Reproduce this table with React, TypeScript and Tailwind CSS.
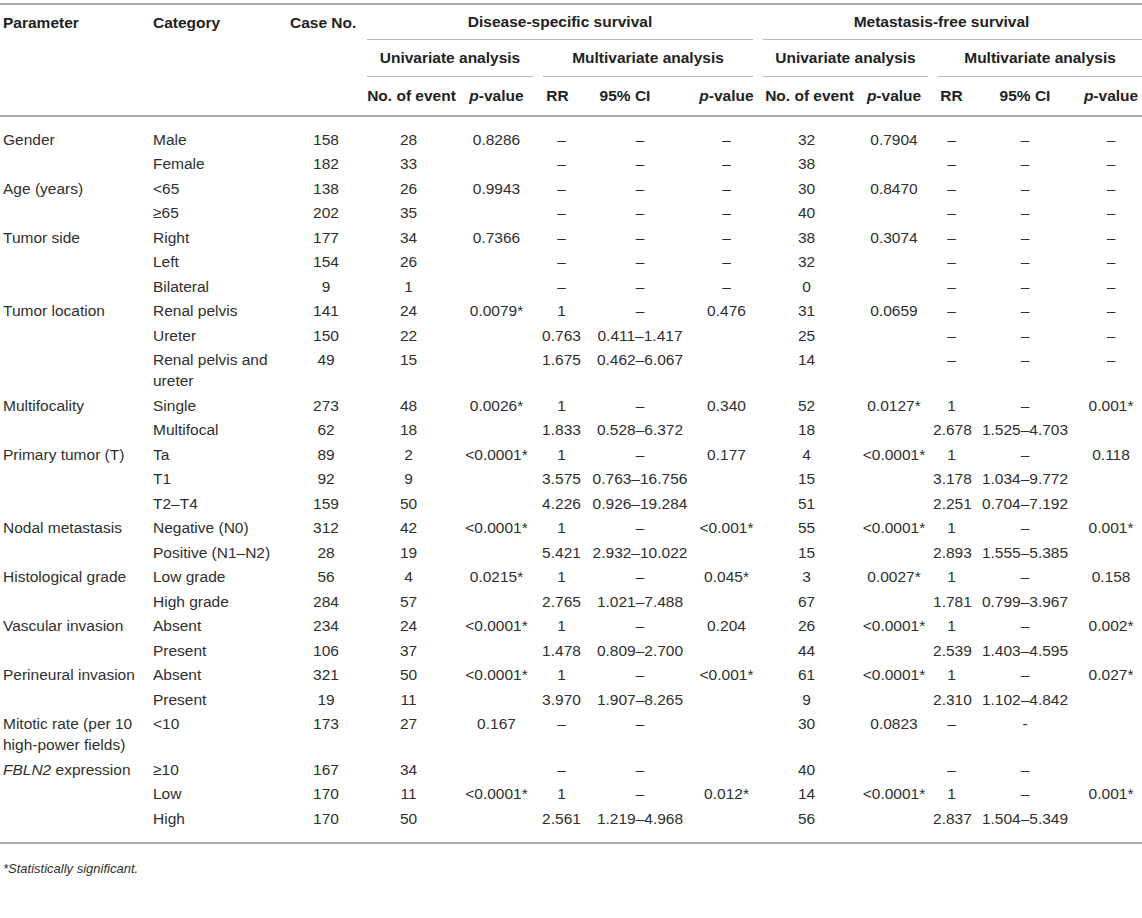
import React from "react";

type Cell = React.ReactNode;

const I = ({ children }: { children: React.ReactNode }) => <span className="italic">{children}</span>;

const rows: Cell[][] = [
  ["Gender", "Male", "158", "28", "0.8286", "–", "–", "–", "32", "0.7904", "–", "–", "–"],
  ["", "Female", "182", "33", "", "–", "–", "–", "38", "", "–", "–", "–"],
  ["Age (years)", "<65", "138", "26", "0.9943", "–", "–", "–", "30", "0.8470", "–", "–", "–"],
  ["", "≥65", "202", "35", "", "–", "–", "–", "40", "", "–", "–", "–"],
  ["Tumor side", "Right", "177", "34", "0.7366", "–", "–", "–", "38", "0.3074", "–", "–", "–"],
  ["", "Left", "154", "26", "", "–", "–", "–", "32", "", "–", "–", "–"],
  ["", "Bilateral", "9", "1", "", "–", "–", "–", "0", "", "–", "–", "–"],
  ["Tumor location", "Renal pelvis", "141", "24", "0.0079*", "1", "–", "0.476", "31", "0.0659", "–", "–", "–"],
  ["", "Ureter", "150", "22", "", "0.763", "0.411–1.417", "", "25", "", "–", "–", "–"],
  ["", "Renal pelvis and ureter", "49", "15", "", "1.675", "0.462–6.067", "", "14", "", "–", "–", "–"],
  ["Multifocality", "Single", "273", "48", "0.0026*", "1", "–", "0.340", "52", "0.0127*", "1", "–", "0.001*"],
  ["", "Multifocal", "62", "18", "", "1.833", "0.528–6.372", "", "18", "", "2.678", "1.525–4.703", ""],
  ["Primary tumor (T)", "Ta", "89", "2", "<0.0001*", "1", "–", "0.177", "4", "<0.0001*", "1", "–", "0.118"],
  ["", "T1", "92", "9", "", "3.575", "0.763–16.756", "", "15", "", "3.178", "1.034–9.772", ""],
  ["", "T2–T4", "159", "50", "", "4.226", "0.926–19.284", "", "51", "", "2.251", "0.704–7.192", ""],
  ["Nodal metastasis", "Negative (N0)", "312", "42", "<0.0001*", "1", "–", "<0.001*", "55", "<0.0001*", "1", "–", "0.001*"],
  ["", "Positive (N1–N2)", "28", "19", "", "5.421", "2.932–10.022", "", "15", "", "2.893", "1.555–5.385", ""],
  ["Histological grade", "Low grade", "56", "4", "0.0215*", "1", "–", "0.045*", "3", "0.0027*", "1", "–", "0.158"],
  ["", "High grade", "284", "57", "", "2.765", "1.021–7.488", "", "67", "", "1.781", "0.799–3.967", ""],
  ["Vascular invasion", "Absent", "234", "24", "<0.0001*", "1", "–", "0.204", "26", "<0.0001*", "1", "–", "0.002*"],
  ["", "Present", "106", "37", "", "1.478", "0.809–2.700", "", "44", "", "2.539", "1.403–4.595", ""],
  ["Perineural invasion", "Absent", "321", "50", "<0.0001*", "1", "–", "<0.001*", "61", "<0.0001*", "1", "–", "0.027*"],
  ["", "Present", "19", "11", "", "3.970", "1.907–8.265", "", "9", "", "2.310", "1.102–4.842", ""],
  ["Mitotic rate (per 10 high-power fields)", "<10", "173", "27", "0.167", "–", "–", "", "30", "0.0823", "–", "-", ""],
  [<><I>FBLN2</I> expression</>, "≥10", "167", "34", "", "–", "–", "", "40", "", "–", "–", ""],
  ["", "Low", "170", "11", "<0.0001*", "1", "–", "0.012*", "14", "<0.0001*", "1", "–", "0.001*"],
  ["", "High", "170", "50", "", "2.561", "1.219–4.968", "", "56", "", "2.837", "1.504–5.349", ""],
];

const PV = () => (
  <>
    <I>p</I>-value
  </>
);

export default function App() {
  return (
    <div className="w-[1142px] bg-white text-[#2f2f2f] font-['Liberation_Sans',Arial,sans-serif] text-[15.5px]">
      <div className="mt-[3px] border-y-2 border-[#a9a9a9]">
        <table className="w-[1142px] table-fixed border-collapse">
          <colgroup>
            <col className="w-[150px]" />
            <col className="w-[140px]" />
            <col className="w-[72px]" />
            <col className="w-[93px]" />
            <col className="w-[83px]" />
            <col className="w-[47px]" />
            <col className="w-[110px]" />
            <col className="w-[63px]" />
            <col className="w-[97px]" />
            <col className="w-[78px]" />
            <col className="w-[37px]" />
            <col className="w-[110px]" />
            <col className="w-[62px]" />
          </colgroup>
          <thead className="font-bold text-[#222]">
            <tr>
              <th className="p-0 text-left font-bold">
                <div className="h-[35px] flex items-center pl-[3px]">Parameter</div>
              </th>
              <th className="p-0 text-left font-bold">
                <div className="h-[35px] flex items-center pl-[3px]">Category</div>
              </th>
              <th className="p-0 text-left font-bold">
                <div className="h-[35px] flex items-center whitespace-nowrap">Case No.</div>
              </th>
              <th colSpan={5} className="p-0 font-bold">
                <div className="h-[35px] mx-[5px] flex items-center justify-center border-b border-[#b8b8b8]">
                  Disease-specific survival
                </div>
              </th>
              <th colSpan={5} className="p-0 font-bold">
                <div className="h-[35px] ml-[5px] pr-[22px] flex items-center justify-center border-b border-[#b8b8b8]">
                  Metastasis-free survival
                </div>
              </th>
            </tr>
            <tr>
              <th className="p-0" />
              <th className="p-0" />
              <th className="p-0" />
              <th colSpan={2} className="p-0 font-bold">
                <div className="h-[37px] mx-[5px] flex items-center justify-center border-b border-[#b8b8b8]">
                  Univariate analysis
                </div>
              </th>
              <th colSpan={3} className="p-0 font-bold">
                <div className="h-[37px] mx-[5px] flex items-center justify-center border-b border-[#b8b8b8]">
                  Multivariate analysis
                </div>
              </th>
              <th colSpan={2} className="p-0 font-bold">
                <div className="h-[37px] mx-[5px] flex items-center justify-center border-b border-[#b8b8b8]">
                  Univariate analysis
                </div>
              </th>
              <th colSpan={3} className="p-0 font-bold">
                <div className="h-[37px] ml-[5px] flex items-center justify-center border-b border-[#b8b8b8]">
                  Multivariate analysis
                </div>
              </th>
            </tr>
            <tr className="border-b-2 border-[#a9a9a9]">
              <th className="p-0" />
              <th className="p-0" />
              <th className="p-0" />
              <th className="p-0 font-bold">
                <div className="h-[38px] flex items-center justify-center whitespace-nowrap pl-[6px]">No. of event</div>
              </th>
              <th className="p-0 font-bold">
                <div className="h-[38px] flex items-center justify-center"><PV /></div>
              </th>
              <th className="p-0 font-bold">
                <div className="h-[38px] flex items-center justify-center pr-[8px]">RR</div>
              </th>
              <th className="p-0 font-bold">
                <div className="h-[38px] flex items-center justify-center pr-[30px]">95% CI</div>
              </th>
              <th className="p-0 font-bold">
                <div className="h-[38px] flex items-center justify-center"><PV /></div>
              </th>
              <th className="p-0 font-bold">
                <div className="h-[38px] flex items-center justify-center whitespace-nowrap pl-[6px]">No. of event</div>
              </th>
              <th className="p-0 font-bold">
                <div className="h-[38px] flex items-center justify-center"><PV /></div>
              </th>
              <th className="p-0 font-bold">
                <div className="h-[38px] flex items-center justify-center">RR</div>
              </th>
              <th className="p-0 font-bold">
                <div className="h-[38px] flex items-center justify-center">95% CI</div>
              </th>
              <th className="p-0 font-bold">
                <div className="h-[38px] flex items-center justify-center whitespace-nowrap">
                  <PV />
                </div>
              </th>
            </tr>
          </thead>
          <tbody>
            <tr className="h-[11px]">
              <td colSpan={13} className="p-0" />
            </tr>
            {rows.map((r, ri) => (
              <tr key={ri}>
                {r.map((c, ci) => (
                  <td
                    key={ci}
                    className={
                      ci < 2
                        ? "align-top text-left pl-[3px] pr-[4px] py-[1.75px] leading-[21px]"
                        : "align-top text-center whitespace-nowrap py-[1.75px] leading-[21px]"
                    }
                  >
                    {c}
                  </td>
                ))}
              </tr>
            ))}
            <tr className="h-[11px]">
              <td colSpan={13} className="p-0" />
            </tr>
          </tbody>
        </table>
      </div>
      <div className="mt-[16px] pl-[3px] text-[13px] leading-[18px] italic">*Statistically significant.</div>
    </div>
  );
}
